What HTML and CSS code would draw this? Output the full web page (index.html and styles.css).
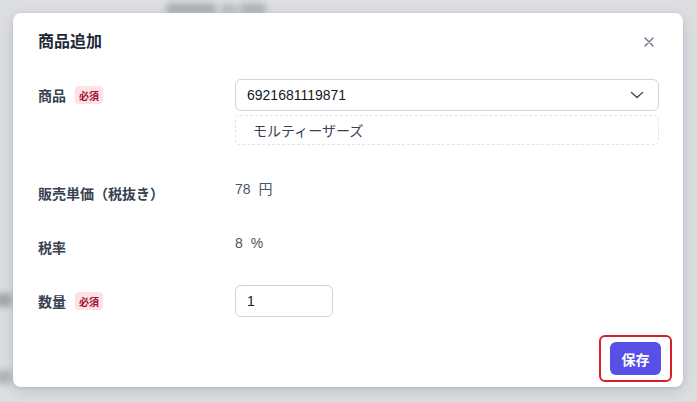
FILE: index.html
```html
<!DOCTYPE html>
<html lang="ja">
<head>
<meta charset="utf-8">
<title>商品追加</title>
<link rel="stylesheet" href="styles.css">
</head>
<body>
<div class="page-behind" aria-hidden="true">
  <span class="ghost ghost-top-a"></span>
  <span class="ghost ghost-top-b"></span>
  <span class="ghost ghost-top-c"></span>
  <span class="ghost ghost-left-a"></span>
  <span class="ghost ghost-left-b"></span>
</div>
<div class="overlay">
  <div class="modal">
    <div class="modal-head">
      <h2 class="modal-title">商品追加</h2>
      <button class="close-btn" aria-label="閉じる">
        <svg width="10" height="10" viewBox="0 0 10 10"><path d="M1 1L9 9M9 1L1 9" stroke="#6b7280" stroke-width="1.4" stroke-linecap="round"/></svg>
      </button>
    </div>
    <div class="modal-body">
      <div class="form-row row-product">
        <div class="label">商品<span class="badge">必須</span></div>
        <div class="field">
          <div class="select">
            <span>6921681119871</span>
            <svg class="chevron" width="14" height="8" viewBox="0 0 14 8"><path d="M1.5 1.5L7 6.5L12.5 1.5" fill="none" stroke="#4b5563" stroke-width="1.6" stroke-linecap="round" stroke-linejoin="round"/></svg>
          </div>
          <div class="product-name">モルティーザーズ</div>
        </div>
      </div>
      <div class="form-row">
        <div class="label">販売単価（税抜き）</div>
        <div class="value"><span>78</span><span class="unit">円</span></div>
      </div>
      <div class="form-row">
        <div class="label">税率</div>
        <div class="value"><span>8</span><span class="unit">%</span></div>
      </div>
      <div class="form-row">
        <div class="label">数量<span class="badge">必須</span></div>
        <div class="field"><div class="qty-input">1</div></div>
      </div>
    </div>
    <div class="modal-foot">
      <div class="save-wrap">
        <button class="save-btn">保存</button>
        <span class="highlight"></span>
      </div>
    </div>
  </div>
</div>
</body>
</html>
```

FILE: styles.css
```css
* { box-sizing: border-box; }
html, body { margin: 0; padding: 0; }
body {
  width: 697px;
  height: 402px;
  overflow: hidden;
  background: #dcdee2;
  font-family: "Liberation Sans", "Noto Sans CJK JP", sans-serif;
  position: relative;
}
.page-behind { position: absolute; inset: 0; }
.ghost {
  position: absolute;
  background: #7d828c;
  border-radius: 4px;
  filter: blur(3px);
  opacity: 0.5;
}
.ghost-top-a { left: 166px; top: 3px; width: 50px; height: 11px; }
.ghost-top-b { left: 220px; top: 4px; width: 18px; height: 10px; opacity: 0.35; }
.ghost-top-c { left: 240px; top: 3px; width: 26px; height: 11px; opacity: 0.45; }
.ghost-left-a { left: -6px; top: 293px; width: 18px; height: 14px; opacity: 0.6; }
.ghost-left-b { left: -6px; top: 370px; width: 18px; height: 14px; opacity: 0.45; }

.overlay {
  position: relative;
  padding: 13px 14px 0 13px;
}
.modal {
  width: 670px;
  height: 374px;
  background: #ffffff;
  border-radius: 8px;
  box-shadow: 0 4px 14px rgba(60, 64, 80, 0.18), 0 1px 3px rgba(60, 64, 80, 0.12);
  padding: 17px 24px 12px 25px;
  display: flex;
  flex-direction: column;
}
.modal-head {
  display: flex;
  align-items: center;
  justify-content: space-between;
  height: 24px;
}
.modal-title {
  margin: 0;
  font-size: 16px;
  line-height: 24px;
  font-weight: 700;
  color: #1f2937;
}
.close-btn {
  width: 20px;
  height: 20px;
  padding: 0;
  border: 0;
  background: none;
  display: flex;
  align-items: center;
  justify-content: center;
}
.modal-body {
  margin-top: 25px;
  display: flex;
  flex-direction: column;
  gap: 22px;
}
.form-row {
  display: grid;
  grid-template-columns: 197px 1fr;
  min-height: 32px;
}
.row-product { margin-bottom: 10px; }
.label {
  display: flex;
  align-items: center;
  height: 32px;
  font-size: 14px;
  font-weight: 700;
  color: #374151;
  gap: 9px;
}
.badge {
  display: inline-flex;
  align-items: center;
  justify-content: center;
  width: 28px;
  height: 18px;
  border-radius: 4px;
  background: #fde1e5;
  color: #a01030;
  font-size: 10px;
  font-weight: 700;
}
.field { display: flex; flex-direction: column; gap: 4px; }
.select {
  height: 32px;
  border: 1px solid #d1d5db;
  border-radius: 6px;
  padding: 0 14px 0 11px;
  display: flex;
  align-items: center;
  justify-content: space-between;
  font-size: 14px;
  color: #111827;
}
.product-name {
  height: 30px;
  border: 1px dashed #e1e4e8;
  border-radius: 5px;
  padding-left: 17px;
  display: flex;
  align-items: center;
  font-size: 14px;
  color: #374151;
}
.value {
  font-size: 14px;
  line-height: 24px;
  color: #4b5563;
  display: flex;
  gap: 8px;
}
.qty-input {
  width: 98px;
  height: 32px;
  border: 1px solid #d1d5db;
  border-radius: 6px;
  padding-left: 11px;
  display: flex;
  align-items: center;
  font-size: 14px;
  color: #111827;
}
.modal-foot {
  margin-top: auto;
  margin-right: -2px;
  display: flex;
  justify-content: flex-end;
}
.save-wrap { position: relative; }
.save-btn {
  width: 51px;
  height: 33px;
  border: 0;
  border-radius: 6px;
  background: #5850e6;
  color: #ffffff;
  font-family: "Noto Sans CJK JP", sans-serif;
  font-size: 14px;
  font-weight: 700;
  padding: 0;
  display: block;
}
.highlight {
  position: absolute;
  left: -11px;
  top: -7px;
  width: 73px;
  height: 47px;
  border: 2.5px solid #d81e2b;
  border-radius: 6px;
}
```
